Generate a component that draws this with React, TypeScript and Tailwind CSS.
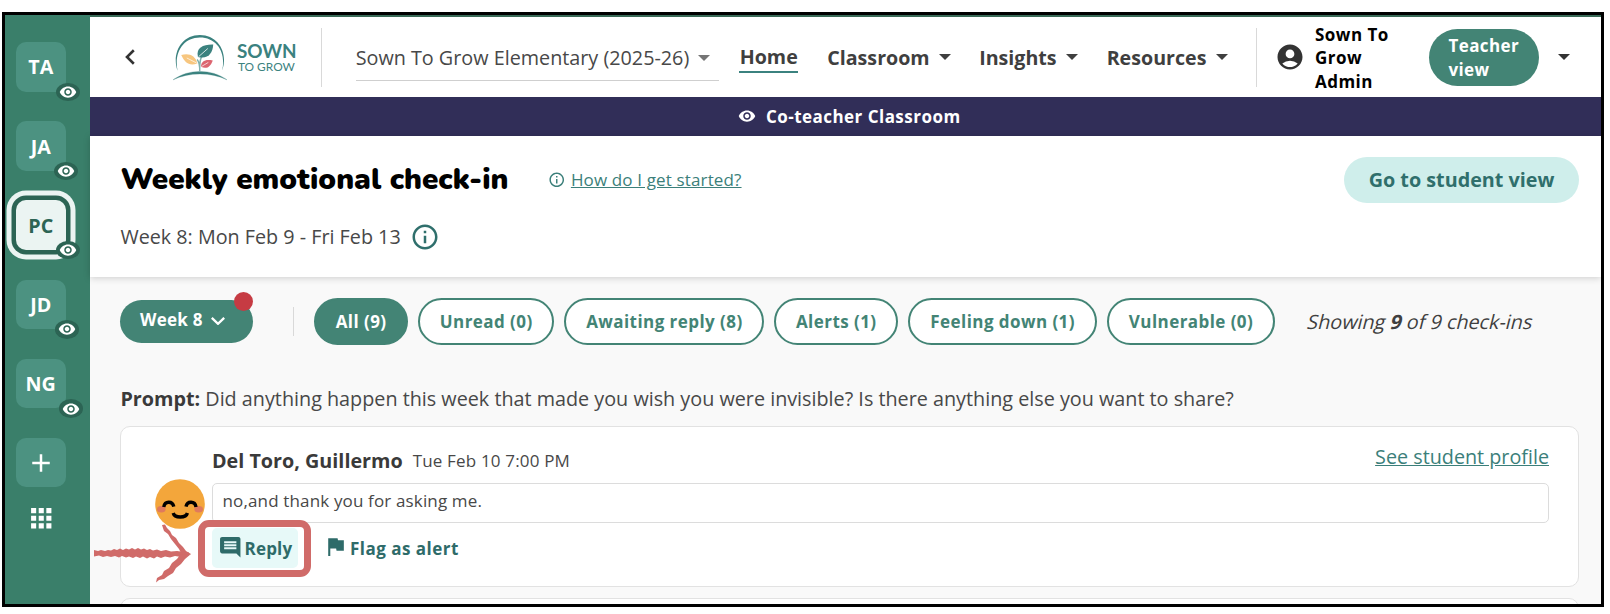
import React from "react";
import {
  MdAccountCircle,
  MdAdd,
  MdApps,
  MdComment,
  MdFlag,
  MdOutlineInfo,
  MdVisibility,
} from "react-icons/md";

type Tile = { initials: string; badge: string; active?: boolean };

const tiles: Tile[] = [
  { initials: "TA", badge: "left-[40px]" },
  { initials: "JA", badge: "left-[37.5px]" },
  { initials: "PC", badge: "left-[40px]", active: true },
  { initials: "JD", badge: "left-[38.5px]" },
  { initials: "NG", badge: "left-[42.5px]" },
];

function Caret({ className = "" }: { className?: string }) {
  return (
    <svg viewBox="0 0 12 6" className={`h-[6px] w-[12px] shrink-0 ${className}`} fill="currentColor">
      <path d="M0 0h12L6 6z" />
    </svg>
  );
}

function Sidebar() {
  return (
    <aside className="flex w-[85.400px] shrink-0 flex-col items-start bg-[#3a7f6a] pl-[11px] pt-[27px]">
      <div className="flex flex-col gap-[29.7px]">
        {tiles.map((t) => (
          <div
            key={t.initials}
            className={
              t.active
                ? "relative flex h-[49.5px] w-[49.5px] items-center justify-center rounded-[10px] bg-[#ebf4f2] pt-px text-[19.7px] font-bold text-[#2c6454] shadow-[0_0_0_4.5px_#2c6454,0_0_0_9.5px_#ebf4f2]"
                : "relative flex h-[49.5px] w-[49.5px] items-center justify-center rounded-[10px] bg-[#4c9281] pt-px text-[19.7px] font-bold text-white"
            }
          >
            {t.initials}
            <span
              className={`absolute top-[40.5px] flex h-[18.5px] w-[24px] items-center justify-center rounded-[50%] bg-[#2c6454] text-white ${t.badge}`}
            >
              <MdVisibility className="h-[18px] w-[18px] shrink-0" />
            </span>
          </div>
        ))}
        <div className="flex h-[49.5px] w-[49.5px] items-center justify-center rounded-[10px] bg-[#4c9281] text-white">
          <MdAdd className="h-[30px] w-[30px]" />
        </div>
      </div>
      <MdApps className="ml-[9.5px] mt-[15.5px] h-[30.5px] w-[30.5px] text-white" />
    </aside>
  );
}

function Logo() {
  return (
    <div className="flex items-center">
      <svg viewBox="0 0 56 48" className="h-[47px] w-[55px]">
        <path
          d="M4.6 37.5C-1.6 20.5 8 1 27.4 1C46.800 1 56.600 20.500 50 37.500C54.500 19.500 45 3.600 27.400 3.600C9.800 3.600 .8 19.800 4.600 37.500Z"
          fill="#3b827f"
        />
        <path d="M0 46.800C16 35.400 39 35.400 55 46.800C39 38.800 16 38.800 0 46.800Z" fill="#3b827f" stroke="#3b827f" strokeWidth=".3" />
        <path d="M27.200 38.500C27.400 31 26 27.500 24.500 26M27.200 38C27 27 28 22 34 17" fill="none" stroke="#7fb0ad" strokeWidth="1.500" />
        <path d="M25.400 23.500C23 14 31 10.500 41 10.800C40.500 20 35.500 26 25.400 23.500Z" fill="#3b827f" />
        <path d="M26 23.200L35.500 14.800" stroke="#fff" strokeWidth=".8" />
        <path d="M8.300 21.500C16 19 23 22 24.800 30.200C16 33.200 12 29 8.300 21.500Z" fill="#f7c67f" />
        <path d="M14 24.500L24 29.600" stroke="#fff" strokeWidth=".7" />
        <path d="M28.500 33.500C28.500 27.500 33 25.500 40.500 27C38.500 33 34.500 36.500 28.500 33.500Z" fill="#dc6570" />
        <path d="M29 33.200L36 29" stroke="#fff" strokeWidth=".7" />
      </svg>
      <div className="ml-[8.500px] flex flex-col font-['Lato',sans-serif] text-[#3b827f]">
        <span className="text-[18.900px] font-bold leading-[18px]">SOWN</span>
        <span className="ml-[1px] text-[11.900px] leading-[13px]">TO GROW</span>
      </div>
    </div>
  );
}

function Header() {
  return (
    <header className="flex h-[79.5px] shrink-0 items-center bg-white pt-px text-[#3f3f3f]">
      <svg viewBox="0 0 10 16" className="ml-[34.500px] h-[16px] w-[10px]" fill="none" stroke="#333" strokeWidth="2.600">
        <path d="M8.800 1.300L2 8L8.800 14.700" />
      </svg>
      <div className="ml-[38.500px]">
        <Logo />
      </div>
      <div className="ml-[24px] h-[59px] w-px bg-[#d9d9d9]" />
      <div className="ml-[34px] mt-[1px] flex h-[47px] w-[363px] items-center border-b-[1.500px] border-[#cfcfcf] pt-[1px] text-[19.780px] text-[#484848]">
        <span className="whitespace-nowrap">Sown To Grow Elementary (2025-26)</span>
        <Caret className="ml-[9px] text-[#757575]" />
      </div>
      <nav className="flex items-center text-[19.650px] font-bold">
        <span className="ml-[20px] mt-[2px] h-[30px] border-b-2 border-[#3b827f] pl-[1px] leading-[28px]">Home</span>
        <span className="ml-[29.500px]">Classroom</span>
        <Caret className="ml-[9.500px]" />
        <span className="ml-[28px]">Insights</span>
        <Caret className="ml-[9px]" />
        <span className="ml-[29px]">Resources</span>
        <Caret className="ml-[9.500px]" />
      </nav>
      <div className="ml-[28px] h-[59px] w-px bg-[#d9d9d9]" />
      <MdAccountCircle className="ml-[18.500px] h-[30px] w-[30px] shrink-0 text-[#333]" />
      <div className="ml-[9.500px] w-[95px] pt-[2px] text-[17px] font-bold leading-[23.700px] tracking-[0.500px] text-black">
        Sown To Grow Admin
      </div>
      <div className="ml-[19px] flex h-[57.500px] w-[110.500px] items-center rounded-full bg-[#438475] pl-[19.500px] pr-4 pt-px text-[17px] font-bold leading-[24px] tracking-[0.400px] text-white">
        Teacher view
      </div>
      <Caret className="ml-[19px] text-[#333]" />
    </header>
  );
}

function TitleSection() {
  return (
    <section className="relative h-[140.500px] shrink-0 bg-white pl-[30px] pr-[22px] pt-[20.500px] shadow-[0_1px_7px_rgba(0,0,0,0.180)]">
      <div className="flex h-[46px] items-center">
        <h1 className="w-[391px] whitespace-nowrap font-['Nunito','Lato',sans-serif] text-[29.600px] font-black text-black">
          Weekly emotional check-in
        </h1>
        <div className="ml-[37px] flex items-center text-[#3b7f7a]">
          <MdOutlineInfo className="h-[17.500px] w-[17.500px]" />
          <a className="ml-[5px] pt-px text-[17px] tracking-[0.140px] underline">How do I get started?</a>
        </div>
        <button className="ml-auto h-[46px] w-[235px] rounded-full bg-[#cfeeeb] pt-px text-[19.750px] font-bold text-[#2f6f6c]">
          Go to student view
        </button>
      </div>
      <div className="mt-[19px] flex h-[30px] items-center text-[19.750px] text-[#484848]">
        <span>Week 8: Mon Feb 9 - Fri Feb 13</span>
        <MdOutlineInfo className="ml-[9.500px] mt-[1px] h-[30px] w-[30px] text-[#2f6f6c]" />
      </div>
    </section>
  );
}

const pills = [
  { label: "All (9)", cls: "w-[94px] bg-[#438475] text-white" },
  { label: "Unread (0)", cls: "w-[136.500px] bg-white text-[#438475]" },
  { label: "Awaiting reply (8)", cls: "w-[200px] bg-white text-[#438475]" },
  { label: "Alerts (1)", cls: "w-[124px] bg-white text-[#438475]" },
  { label: "Feeling down (1)", cls: "w-[189px] bg-white text-[#438475]" },
  { label: "Vulnerable (0)", cls: "w-[168px] bg-white text-[#438475]" },
];

function Filters() {
  return (
    <div className="flex h-[47.500px] items-center text-[17px] font-bold tracking-[0.440px]">
      <button className="relative flex h-[43px] w-[133px] items-center rounded-full bg-[#438475] pb-[4px] pl-[19.500px] tracking-[0.300px] text-white">
        Week 8
        <svg viewBox="0 0 14 8" className="ml-[8.500px] mt-[3px] h-[8px] w-[14px]" fill="none" stroke="currentColor" strokeWidth="2.300">
          <path d="M.8 .8L7 6.800L13.200 .8" />
        </svg>
        <span className="absolute -top-[8px] right-0 h-[19px] w-[19px] rounded-full bg-[#c63b43]" />
      </button>
      <div className="ml-[40px] h-[29px] w-px bg-[#d9d9d9]" />
      <div className="ml-[19.700px] flex gap-[9.900px]">
        {pills.map((p) => (
          <button
            key={p.label}
            className={`flex h-[47.500px] items-center justify-center whitespace-nowrap rounded-full border-2 border-[#438475] ${p.cls}`}
          >
            {p.label}
          </button>
        ))}
      </div>
      <span className="ml-[32.500px] inline-block -skew-x-[14deg] whitespace-nowrap pt-px text-[19.750px] font-normal tracking-normal text-[#3f3f3f]">
        Showing <b>9</b> of 9 check-ins
      </span>
    </div>
  );
}

function HappyFace() {
  return (
    <svg viewBox="0 0 50 50" className="mt-[52px] h-[50px] w-[50px] shrink-0">
      <circle cx="25" cy="25" r="24.800" fill="#f3a63b" />
      <ellipse cx="6.300" cy="30.300" rx="4.300" ry="3.300" fill="#e07a5c" />
      <ellipse cx="43.700" cy="30.300" rx="4.300" ry="3.300" fill="#e07a5c" />
      <g fill="none" stroke="#000" strokeWidth="3.400">
        <path d="M8.800 28C9.800 21.800 17.400 21.800 18.800 27.600" />
        <path d="M31 27.600C32.200 21.800 40 21.800 41 28" />
        <path d="M18.200 34C19.600 39.400 31 39.400 32.400 34" />
      </g>
    </svg>
  );
}

function Arrow() {
  return (
    <svg viewBox="0 0 100 68" className="pointer-events-none absolute -left-[28px] top-[91px] h-[68px] w-[100px]" fill="#d06b69">
      <path d="M1 32L5 33L8 32L12 33L15 32L18 32.500L21 31L24 32L27 30.500L30 32L33 30.500L36 31.500L39 30L42 31.500L45 30L48 31.500L51 30.500L54 32L57 31L60 32.500L64 31.500L68 33L73 32L78 33.500L84 33L96 34.500L96 36.500L88 39L82 38L77 39.500L72 38.500L68 40L64 38.500L61 40.500L57 39L54 40.500L50 38.500L47 40L43 38.500L40 40L36 38.500L33 39.500L29 38L26 39.500L22 38L18 39L14 38L10 39L6 37.500L1 38.500Z" />
      <path d="M69 7L72 6.500L74 10L77 13L79 17L83 20L86 25L90 29L93 33L98 36L93 38L89 37L86 31L82 26L78 21L75 16L71 13Z" />
      <path d="M98 36L92 41L88 46L83 50L80 55L75 58L71 61L66 62L63 64.500L64 60L69 57L71 53L76 50L79 45L84 41L87 37Z" />
    </svg>
  );
}

function CheckInCard() {
  return (
    <article className="relative mt-[13px] flex h-[161px] shrink-0 rounded-[10px] border border-[#e2e2e2] bg-white pl-[34px] pr-[29px]">
      <HappyFace />
      <div className="ml-[6.600px] flex flex-1 flex-col">
        <div className="mt-[20px] flex h-[28px] items-center">
          <span className="text-[19.750px] font-bold text-[#3a3a3a]">Del Toro, Guillermo</span>
          <span className="ml-[10px] text-[17px] tracking-[0.170px] text-[#484848]">Tue Feb 10 7:00 PM</span>
          <a className="mb-[8px] ml-auto text-[19.750px] text-[#3b7f7a] underline">See student profile</a>
        </div>
        <div className="mt-[8px] flex h-[39.500px] items-center rounded-[5px] border border-[#dcdcdc] pb-[4px] pl-[9.500px] text-[17px] tracking-[0.150px] text-[#484848]">
          no,and thank you for asking me.
        </div>
        <div className="mt-[5.500px] flex h-[39.500px] items-center text-[17px] font-bold text-[#2e6b69]">
          <button className="relative flex h-[39.500px] w-[86.500px] items-center rounded-[5px] bg-[#e7f9f8] pl-[6px] tracking-[0.200px]">
            <MdComment className="-mt-[2px] h-[24.500px] w-[24.500px]" />
            <span className="ml-[2px] pt-px">Reply</span>
            <span className="absolute -left-[13.500px] -top-[8.500px] h-[57.500px] w-[112.500px] rounded-[11px] border-[7px] border-[#d06b69]" />
          </button>
          <MdFlag className="-mt-[2px] ml-[24.500px] h-[25px] w-[25px]" />
          <span className="ml-[2px] pt-px tracking-[0.480px]">Flag as alert</span>
        </div>
      </div>
      <Arrow />
    </article>
  );
}

export default function App() {
  return (
    <div className="h-[614px] w-[1610px] overflow-hidden bg-white pl-[2px] pt-[12px] font-['Open_Sans',sans-serif]">
      <div className="flex h-[595px] w-[1602px] overflow-hidden border-[3px] border-black">
        <Sidebar />
        <main className="flex min-w-0 flex-1 flex-col border-t-[2.500px] border-[#3a6b58] bg-[#f9f9f9]">
          <Header />
          <div className="flex h-[39.500px] shrink-0 items-center bg-[#312e58] pl-[648px] text-[17px] font-bold tracking-[0.470px] text-white">
            <MdVisibility className="h-[18px] w-[18px]" />
            <span className="ml-[9.500px]">Co-teacher Classroom</span>
          </div>
          <TitleSection />
          <div className="flex flex-col pl-[30px] pr-[22px] pt-[21px]">
            <Filters />
            <p className="mt-[40px] h-[28px] whitespace-nowrap text-[19.770px] leading-[28px] text-[#484848]">
              <b className="text-[#3a3a3a]">Prompt:</b> Did anything happen this week that made you wish you were invisible? Is there anything else you want to share?
            </p>
            <CheckInCard />
            <div className="mt-[10.500px] h-[30px] shrink-0 rounded-[10px] border border-[#e2e2e2] bg-white" />
          </div>
        </main>
      </div>
    </div>
  );
}
